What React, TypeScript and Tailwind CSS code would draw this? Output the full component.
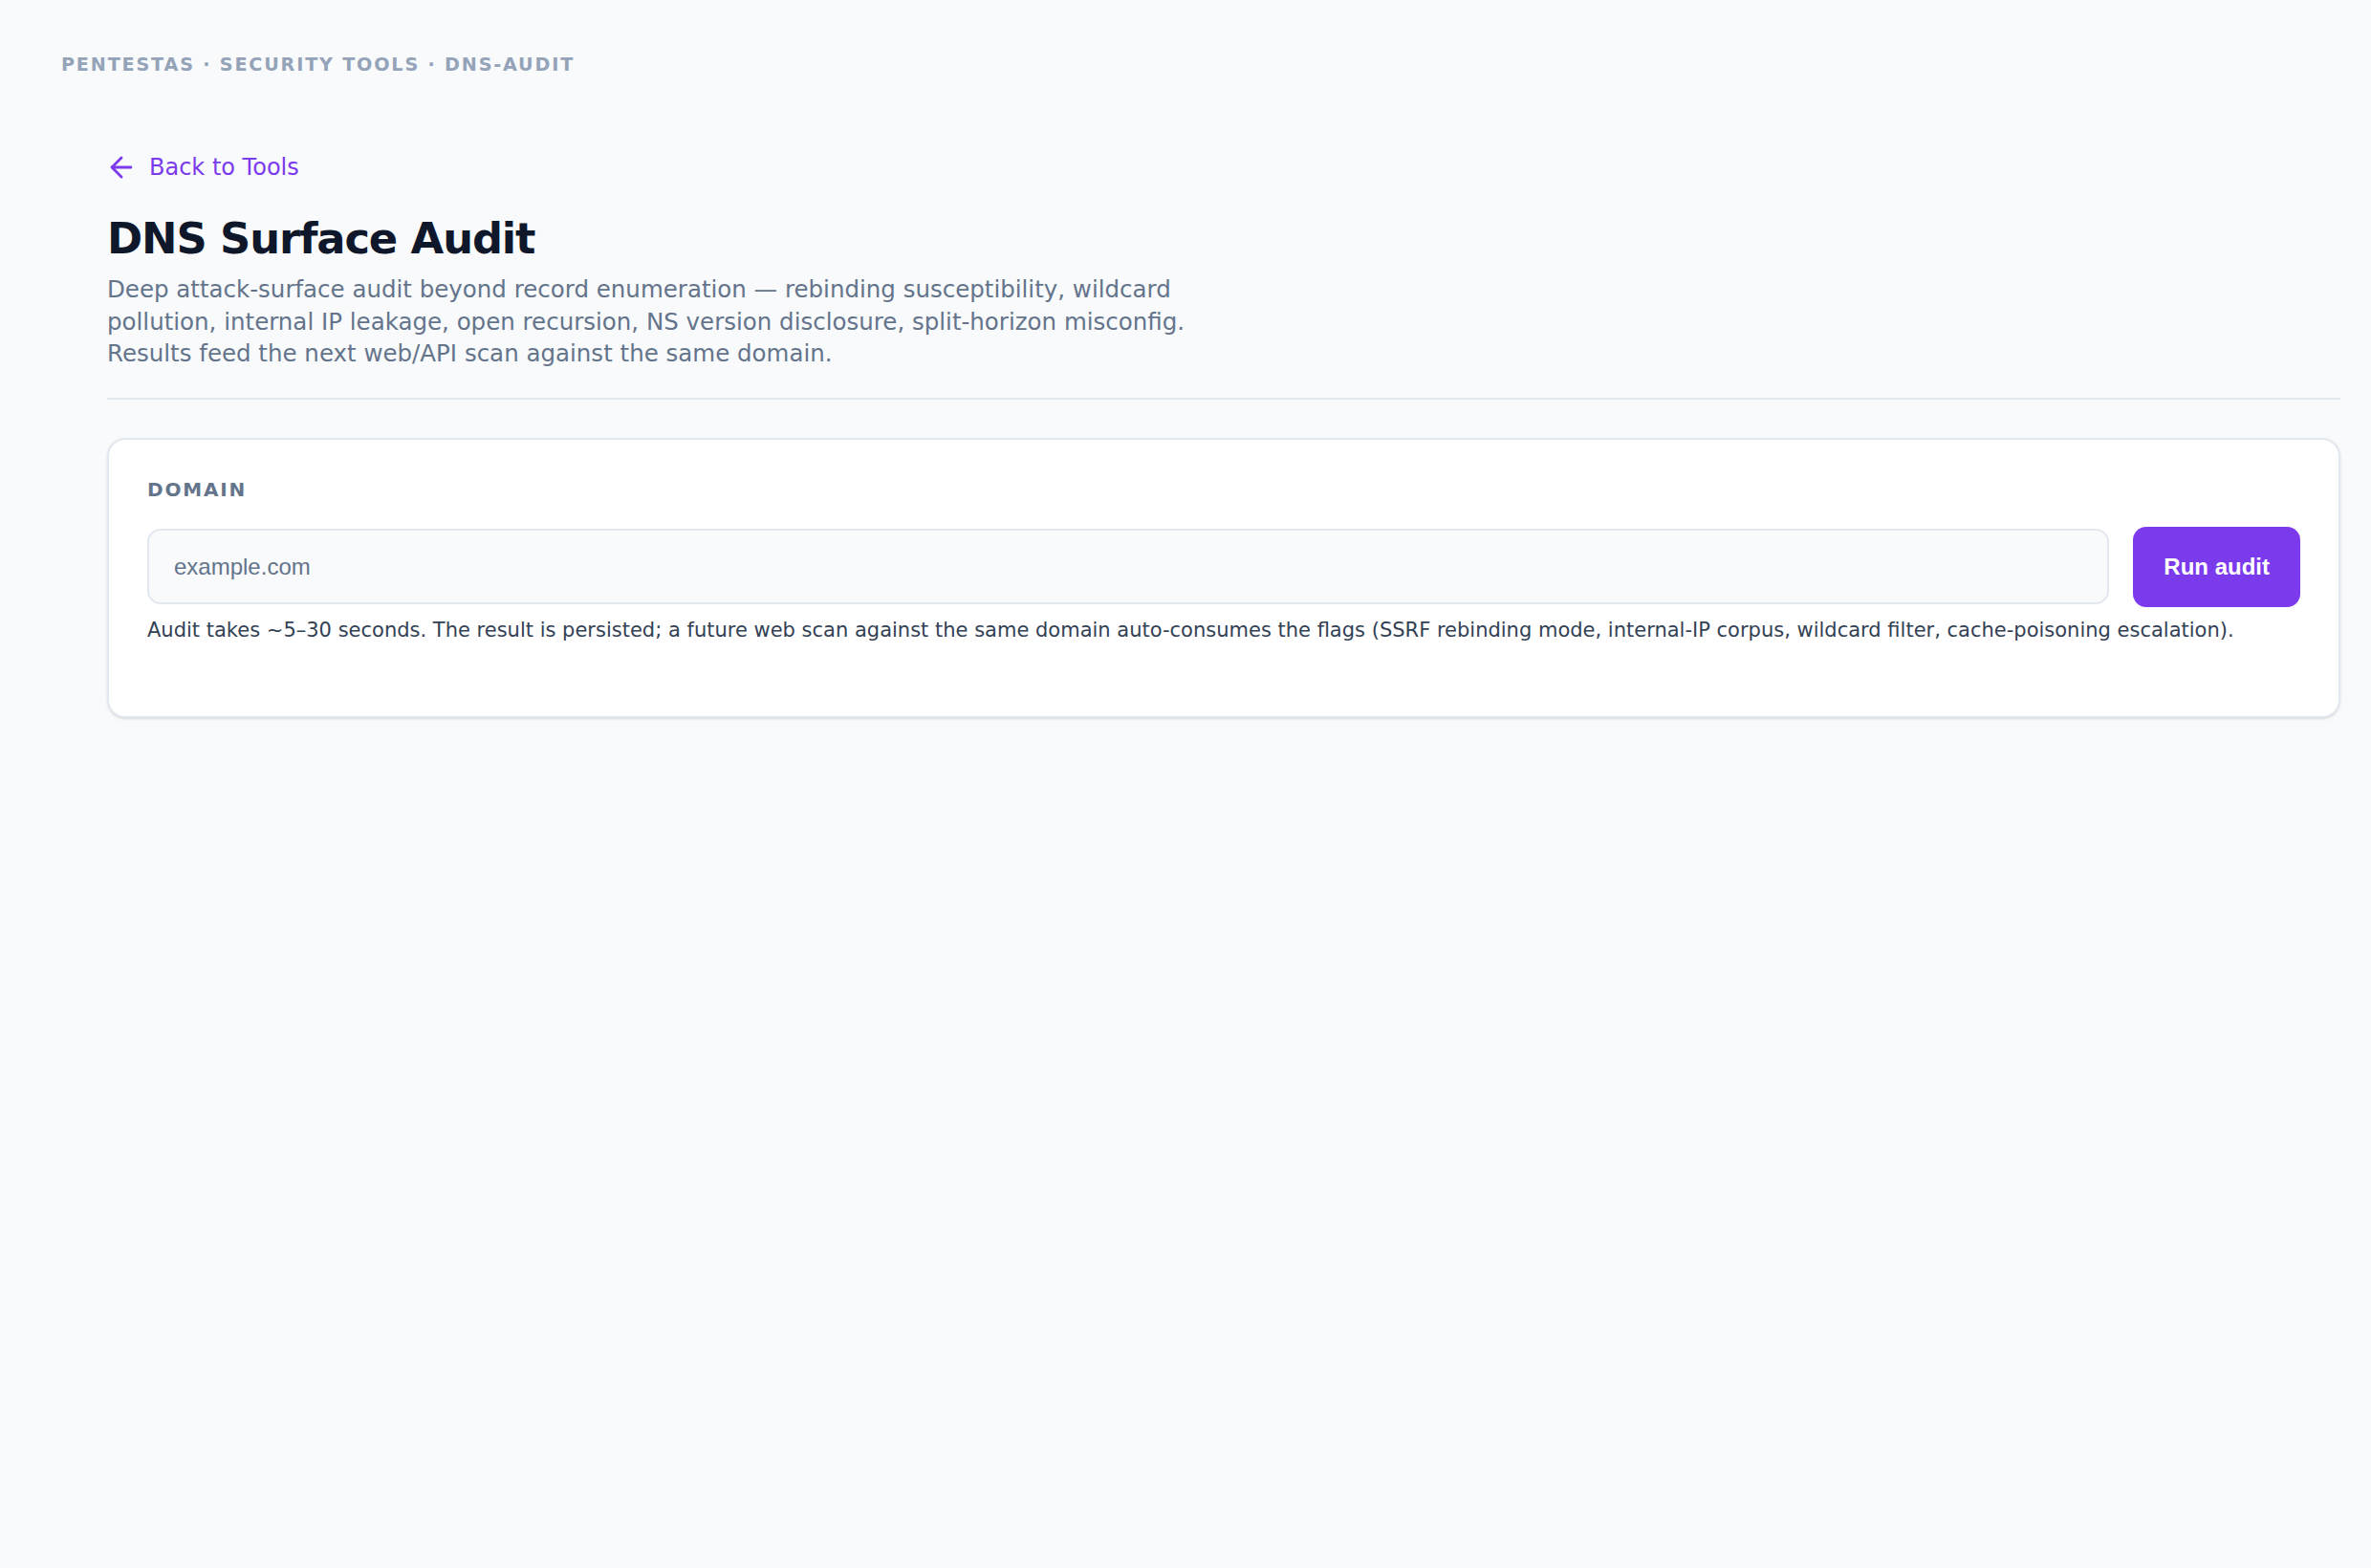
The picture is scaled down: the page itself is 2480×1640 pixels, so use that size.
import React from "react";
import { ArrowLeft } from "lucide-react";

const App = () => {
  return (
    <div className="min-h-screen bg-[#f8fafc] font-['DejaVu_Sans',sans-serif]">
      <div className="px-[64px] pt-[54px]">
        <div className="text-[19.2px] leading-[28.8px] font-bold uppercase tracking-[0.094em] text-[#94a3b8]">
          Pentestas · Security Tools · dns-audit
        </div>
      </div>

      <main className="pl-[112px] pr-[32px]">
        <a
          href="#"
          className="mt-[75px] flex w-fit items-center gap-[12px] text-[24px] leading-[34.5px] text-[#7c3aed]"
        >
          <ArrowLeft size={34} strokeWidth={2} className="-ml-[2px]" />
          Back to Tools
        </a>

        <div className="border-b-[2px] border-[#e2e8f0] pb-[29px]">
          <h1 className="mt-[30px] text-[44.8px] leading-[56px] font-bold tracking-[-0.025em] text-[#0f172a]">
            DNS Surface Audit
          </h1>
          <p className="mt-[8px] max-w-[1180px] text-[24.5px] leading-[33.6px] text-[#64748b]">
            Deep attack-surface audit beyond record enumeration — rebinding
            susceptibility, wildcard pollution, internal IP leakage, open
            recursion, NS version disclosure, split-horizon misconfig. Results
            feed the next web/API scan against the same domain.
          </p>
        </div>

        <section className="mt-[40px] rounded-[19px] border-[2px] border-[#e2e8f0] bg-white px-[40px] pt-[38px] pb-[75px] shadow-sm">
          <label
            htmlFor="domain"
            className="block text-[20px] leading-[28.8px] font-bold uppercase tracking-[0.09em] text-[#64748b]"
          >
            Domain
          </label>
          <div className="mt-[24px] flex items-center gap-[25px]">
            <input
              id="domain"
              type="text"
              placeholder="example.com"
              className="h-[79px] flex-1 rounded-[14px] border-[2px] border-[#e2e8f0] bg-[#f8fafc] px-[26px] font-['Liberation_Sans',sans-serif] text-[24px] text-[#0f172a] outline-none placeholder:text-[#64748b]"
            />
            <button
              type="button"
              className="h-[84px] rounded-[14px] bg-[#7c3aed] px-[32px] font-['Liberation_Sans',sans-serif] text-[24px] font-bold text-white"
            >
              Run audit
            </button>
          </div>
          <p className="mt-[9px] text-[21px] leading-[30px] text-[#334155]">
            Audit takes ~5–30 seconds. The result is persisted; a future web
            scan against the same domain auto-consumes the flags (SSRF
            rebinding mode, internal-IP corpus, wildcard filter, cache-poisoning
            escalation).
          </p>
        </section>
      </main>
    </div>
  );
};

export default App;
